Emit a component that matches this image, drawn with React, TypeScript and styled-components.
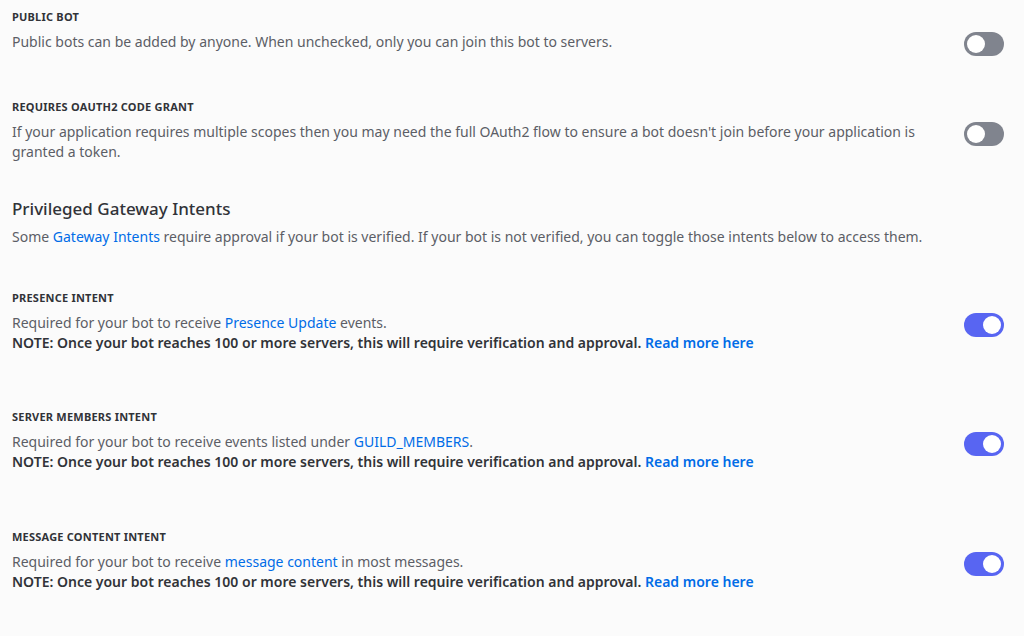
import * as React from "react";
import styled, { createGlobalStyle } from "styled-components";

const COLOURS = {
  BG: "#fbfbfb",
  HEADER: "#313338",
  TEXT: "#5c5e66",
  STRONG: "#313338",
  LINK: "#006ce7",
  TOGGLE_OFF: "#80848e",
  TOGGLE_ON: "#5865f2",
};

const GlobalStyle = createGlobalStyle`
  html, body {
    margin: 0;
    padding: 0;
    background: ${COLOURS.BG};
  }
  body {
    font-family: "Noto Sans", "Open Sans", sans-serif;
    -webkit-font-smoothing: antialiased;
  }
`;

const Page = styled.main`
  width: 1024px;
  height: 636px;
  overflow: hidden;
  padding: 9px 20px 0 12px;
  box-sizing: border-box;
`;

const Setting = styled.section<{ gapAfter: number }>`
  margin-bottom: ${props => props.gapAfter}px;
`;

const Label = styled.h3`
  margin: 0 0 7px;
  font-size: 11px;
  line-height: 16px;
  font-weight: 700;
  letter-spacing: 0.02em;
  text-transform: uppercase;
  color: ${COLOURS.HEADER};
`;

const Row = styled.div`
  display: flex;
  align-items: flex-start;
  gap: 24px;
`;

const Description = styled.div`
  flex: 1;
  font-size: 14px;
  line-height: 20px;
  color: ${COLOURS.TEXT};
`;

const Strong = styled.strong`
  display: block;
  font-weight: 600;
  line-height: 19px;
  color: ${COLOURS.STRONG};
`;

const Link = styled.a`
  color: ${COLOURS.LINK};
  text-decoration: none;
  cursor: pointer;
`;

const Heading = styled.h2`
  margin: 0 0 6px;
  font-size: 17px;
  line-height: 24px;
  font-weight: 500;
  color: ${COLOURS.HEADER};
`;

const Intro = styled.p`
  margin: 0 0 43px;
  font-size: 14px;
  line-height: 20px;
  color: ${COLOURS.TEXT};
`;

const Track = styled.button<{ on: boolean }>`
  position: relative;
  flex: none;
  width: 40px;
  height: 24px;
  margin: 0;
  padding: 0;
  border: none;
  border-radius: 12px;
  background: ${props => (props.on ? COLOURS.TOGGLE_ON : COLOURS.TOGGLE_OFF)};
  cursor: pointer;
`;

const Knob = styled.span<{ on: boolean }>`
  position: absolute;
  top: 3px;
  left: ${props => (props.on ? "19px" : "3px")};
  width: 18px;
  height: 18px;
  border-radius: 50%;
  background: #ffffff;
`;

function Toggle({ initial }: { initial: boolean }) {
  const [on, setOn] = React.useState(initial);
  return (
    <Track on={on} onClick={() => setOn(prev => !prev)} aria-pressed={on}>
      <Knob on={on} />
    </Track>
  );
}

function Note() {
  return (
    <Strong>
      NOTE: Once your bot reaches 100 or more servers, this will require
      verification and approval. <Link>Read more here</Link>
    </Strong>
  );
}

export default function App() {
  return (
    <>
      <GlobalStyle />
      <Page>
        <Setting gapAfter={43}>
          <Label>Public Bot</Label>
          <Row>
            <Description>
              Public bots can be added by anyone. When unchecked, only you can
              join this bot to servers.
            </Description>
            <Toggle initial={false} />
          </Row>
        </Setting>

        <Setting gapAfter={35}>
          <Label>Requires OAuth2 Code Grant</Label>
          <Row>
            <Description>
              If your application requires multiple scopes then you may need
              the full OAuth2 flow to ensure a bot doesn't join before your
              application is granted a token.
            </Description>
            <Toggle initial={false} />
          </Row>
        </Setting>

        <Heading>Privileged Gateway Intents</Heading>
        <Intro>
          Some <Link>Gateway Intents</Link> require approval if your bot is
          verified. If your bot is not verified, you can toggle those intents
          below to access them.
        </Intro>

        <Setting gapAfter={57}>
          <Label>Presence Intent</Label>
          <Row>
            <Description>
              Required for your bot to receive <Link>Presence Update</Link>{" "}
              events.
              <Note />
            </Description>
            <Toggle initial={true} />
          </Row>
        </Setting>

        <Setting gapAfter={58}>
          <Label>Server Members Intent</Label>
          <Row>
            <Description>
              Required for your bot to receive events listed under{" "}
              <Link>GUILD_MEMBERS</Link>.
              <Note />
            </Description>
            <Toggle initial={true} />
          </Row>
        </Setting>

        <Setting gapAfter={0}>
          <Label>Message Content Intent</Label>
          <Row>
            <Description>
              Required for your bot to receive <Link>message content</Link> in
              most messages.
              <Note />
            </Description>
            <Toggle initial={true} />
          </Row>
        </Setting>
      </Page>
    </>
  );
}
